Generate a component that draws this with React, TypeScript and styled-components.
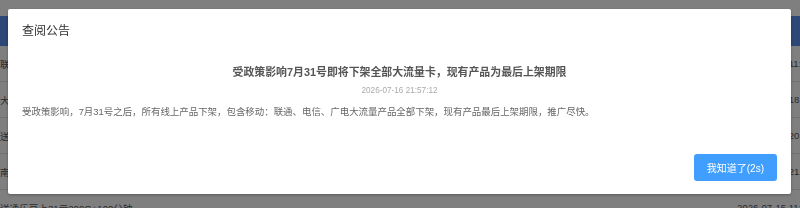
import React from "react";
import styled, { createGlobalStyle } from "styled-components";

const Global = createGlobalStyle`
  html, body { margin: 0; padding: 0; background: #fff; }
  body {
    font-family: "Liberation Sans", "Noto Sans CJK SC", sans-serif;
    overflow: hidden;
  }
`;

const Page = styled.div`
  width: 800px;
  height: 208px;
  padding-top: 16px;
  box-sizing: border-box;
  overflow: hidden;
`;

const TableHead = styled.div`
  height: 30px;
  background: #5a8ff0;
`;

const Row = styled.div`
  height: 36px;
  display: flex;
  align-items: center;
  justify-content: space-between;
  border-bottom: 1px solid #e4e4e4;
  box-sizing: border-box;
  font-size: 9.6px;
  color: #555;
`;

const Name = styled.span`
  white-space: nowrap;
`;

const Time = styled.span`
  width: 63px;
  white-space: nowrap;
  overflow: hidden;
`;

const Overlay = styled.div`
  position: fixed;
  inset: 0;
  background: rgba(0, 0, 0, 0.5);
  padding: 9px 0 0 8px;
  box-sizing: border-box;
`;

const Modal = styled.div`
  width: 783px;
  background: #fff;
  border-radius: 2px;
  box-shadow: 0 1px 3px rgba(0, 0, 0, 0.3);
  display: flex;
  flex-direction: column;
`;

const Header = styled.div`
  padding: 14px 14px 0;
`;

const Title = styled.div`
  font-size: 12px;
  line-height: 16px;
  color: #303133;
`;

const Body = styled.div`
  padding: 25px 14px 0;
  display: flex;
  flex-direction: column;
`;

const Heading = styled.div`
  text-align: center;
  font-size: 10.9px;
  line-height: 16px;
  font-weight: bold;
  color: #555;
`;

const DateLine = styled.div`
  margin-top: 5px;
  text-align: center;
  font-size: 8.2px;
  line-height: 12px;
  color: #aaa;
`;

const Content = styled.div`
  margin-top: 8px;
  font-size: 9.45px;
  line-height: 14px;
  color: #666;
`;

const Footer = styled.div`
  display: flex;
  justify-content: flex-end;
  padding: 35px 14px 13px;
`;

const Button = styled.button`
  height: 27px;
  padding: 0 13px;
  border: none;
  border-radius: 3px;
  background: #409eff;
  color: #fff;
  font-family: inherit;
  font-size: 10px;
  cursor: pointer;
`;

const rows = [
  { name: "联通大流量卡 29元", time: "2026-07-16 11:20" },
  { name: "大王卡 19元", time: "2026-07-16 18:32" },
  { name: "送通乐享卡 39元", time: "2026-07-16 20:05" },
  { name: "南方电信卡 29元", time: "2026-07-16 21:10" },
  { name: "送通乐豆上31元200G+100分钟", time: "2026-07-15 11:46" },
];

export default function App() {
  return (
    <>
      <Global />
      <Page>
        <TableHead />
        {rows.map((r) => (
          <Row key={r.name}>
            <Name>{r.name}</Name>
            <Time>{r.time}</Time>
          </Row>
        ))}
      </Page>
      <Overlay>
        <Modal>
          <Header>
            <Title>查阅公告</Title>
          </Header>
          <Body>
            <Heading>受政策影响7月31号即将下架全部大流量卡，现有产品为最后上架期限</Heading>
            <DateLine>2026-07-16 21:57:12</DateLine>
            <Content>
              受政策影响，7月31号之后，所有线上产品下架，包含移动：联通、电信、广电大流量产品全部下架，现有产品最后上架期限，推广尽快。
            </Content>
          </Body>
          <Footer>
            <Button>我知道了(2s)</Button>
          </Footer>
        </Modal>
      </Overlay>
    </>
  );
}
